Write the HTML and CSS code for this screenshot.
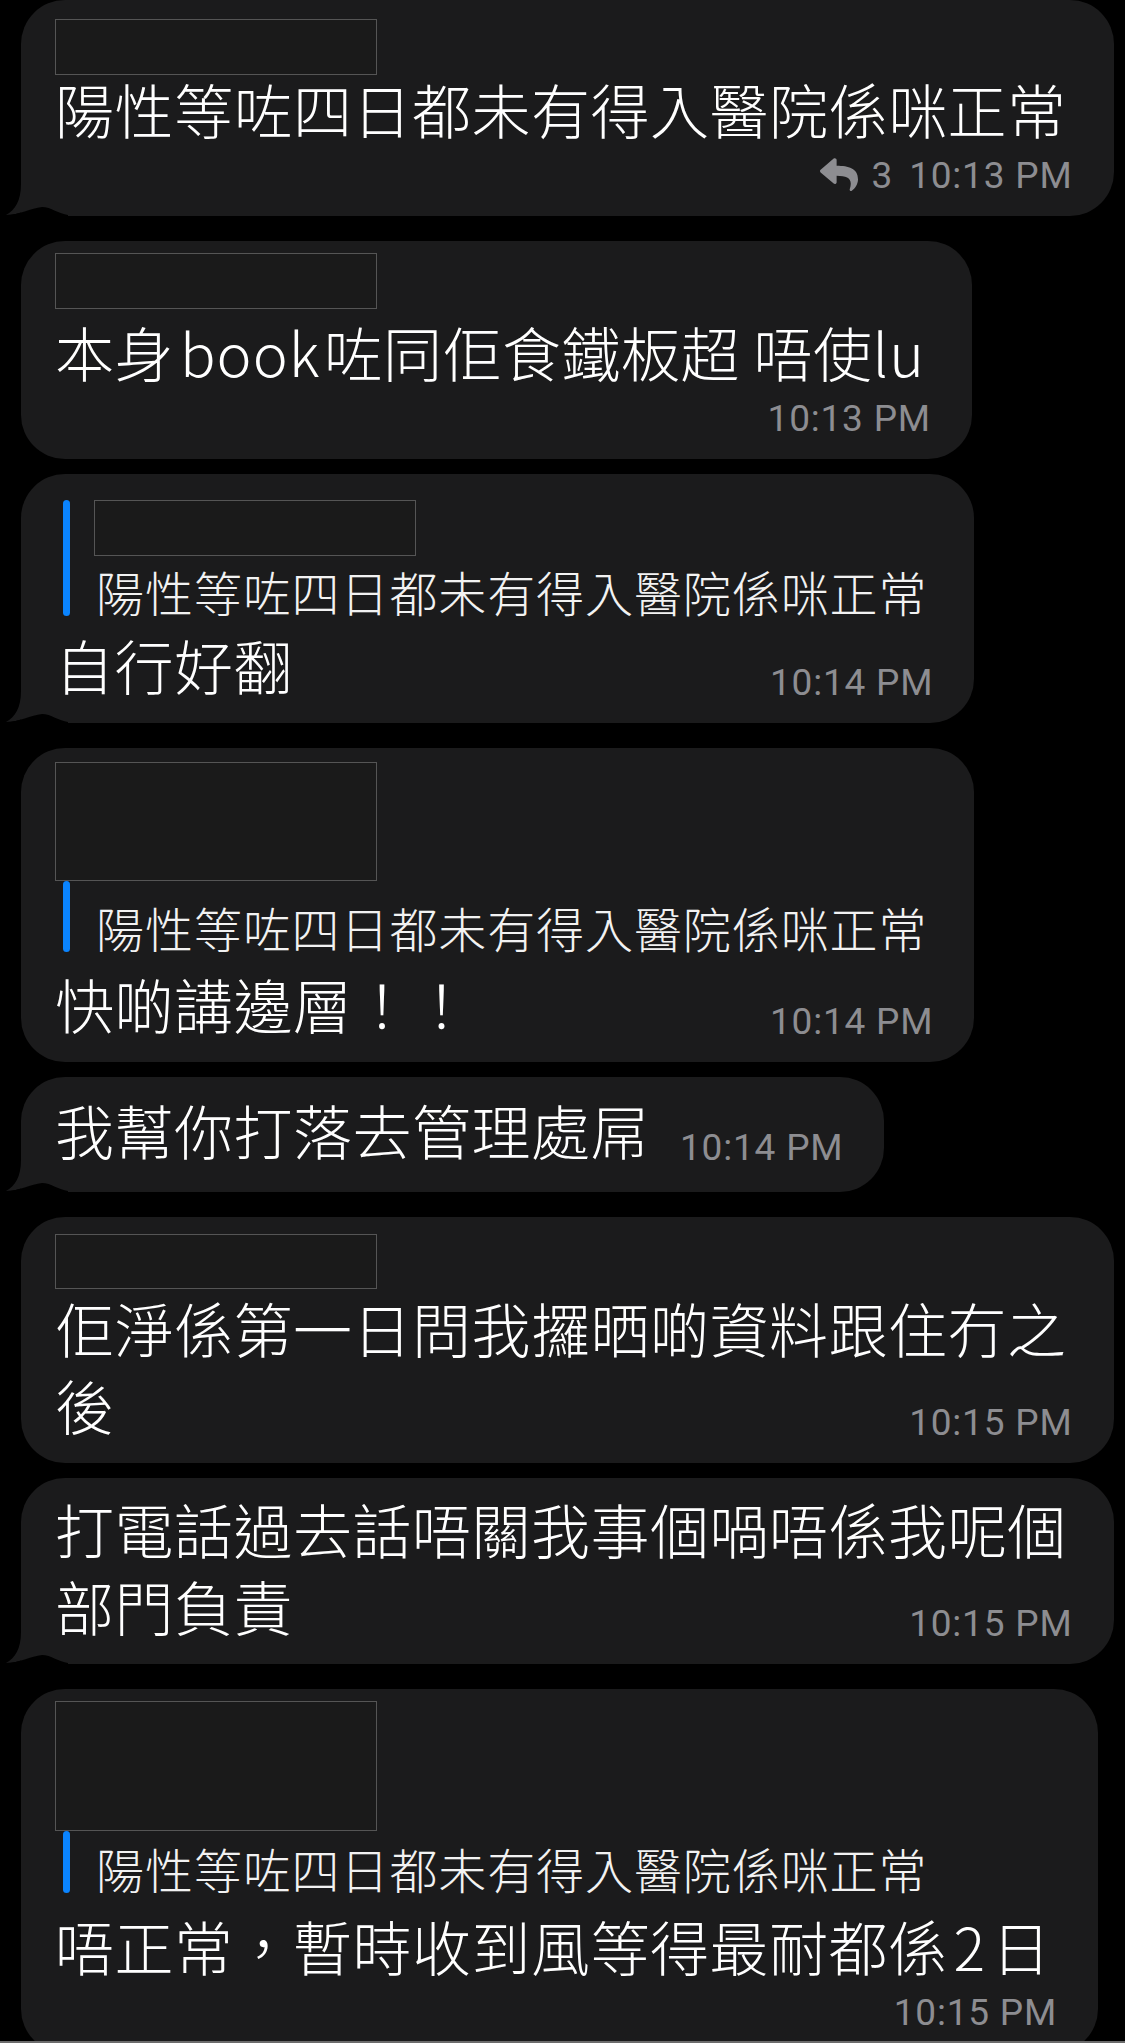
FILE: index.html
```html
<!DOCTYPE html>
<html lang="zh-Hant">
<head>
<meta charset="utf-8">
<title>Chat</title>
<link rel="stylesheet" href="styles.css">
</head>
<body>
<div class="screen">
  <div class="chat">

    <div class="bubble bubble--first bubble--tail">
      <div class="redact redact--name r1"></div>
      <p class="line">陽性等咗四日都未有得入醫院係咪正常</p>
      <div class="meta-line">
        <span class="meta">
          <svg class="reply-icon" viewBox="0 30 512 450" preserveAspectRatio="none"><path d="M8.309 189.836L184.313 37.851C199.719 24.546 224 35.347 224 56.015v80.053c160.629 1.839 288 34.032 288 186.258 0 61.441-39.581 122.309-83.333 154.132-13.653 9.931-33.111-2.533-28.077-18.631 45.344-145.012-21.507-183.51-176.59-185.742V360c0 20.7-24.3 31.453-39.687 18.164l-176.004-152c-11.071-9.562-11.086-26.753 0-36.328z"/></svg>
          <span class="count">3</span>
          <span class="time">10:13 PM</span>
        </span>
      </div>
      <svg class="tail" viewBox="0 0 62 46"><path class="tail-fill" d="M15 0 L15 14 C15 31 9 40 0 45 C13 45 25 38 36 37 L36 0 Z"/><path class="tail-notch" d="M0 45 C13 45 25 38 36 37 C45 37 53 44 62 45 L62 46 L0 46 Z"/></svg>
    </div>

    <div class="bubble bubble--group">
      <div class="redact redact--name r2"></div>
      <p class="line">本身<span class="latin">book</span>咗同佢食鐵板超 唔使<span class="latin latin--end">lu</span></p>
      <div class="meta-line">
        <span class="meta"><span class="time">10:13 PM</span></span>
      </div>
    </div>

    <div class="bubble bubble--tail">
      <div class="quote quote--top">
        <span class="quote-bar"></span>
        <div class="quote-body">
          <div class="redact redact--name rq"></div>
          <p class="quote-text">陽性等咗四日都未有得入醫院係咪正常</p>
        </div>
      </div>
      <div class="row row--after-quote">
        <p class="line">自行好翻</p>
        <span class="meta"><span class="time">10:14 PM</span></span>
      </div>
      <svg class="tail" viewBox="0 0 62 46"><path class="tail-fill" d="M15 0 L15 14 C15 31 9 40 0 45 C13 45 25 38 36 37 L36 0 Z"/><path class="tail-notch" d="M0 45 C13 45 25 38 36 37 C45 37 53 44 62 45 L62 46 L0 46 Z"/></svg>
    </div>

    <div class="bubble bubble--group">
      <div class="redact redact--tall r4"></div>
      <div class="quote">
        <span class="quote-bar"></span>
        <div class="quote-body quote-body--covered">
          <p class="quote-text">陽性等咗四日都未有得入醫院係咪正常</p>
        </div>
      </div>
      <div class="row row--after-quote-b">
        <p class="line">快啲講邊層！！</p>
        <span class="meta"><span class="time">10:14 PM</span></span>
      </div>
    </div>

    <div class="bubble bubble--tail bubble--single">
      <div class="row row--tight">
        <p class="line">我幫你打落去管理處屌</p>
        <span class="meta"><span class="time">10:14 PM</span></span>
      </div>
      <svg class="tail" viewBox="0 0 62 46"><path class="tail-fill" d="M15 0 L15 14 C15 31 9 40 0 45 C13 45 25 38 36 37 L36 0 Z"/><path class="tail-notch" d="M0 45 C13 45 25 38 36 37 C45 37 53 44 62 45 L62 46 L0 46 Z"/></svg>
    </div>

    <div class="bubble bubble--group">
      <div class="redact redact--name r6"></div>
      <p class="line">佢淨係第一日問我攞晒啲資料跟住冇之</p>
      <div class="row">
        <p class="line">後</p>
        <span class="meta"><span class="time">10:15 PM</span></span>
      </div>
    </div>

    <div class="bubble bubble--tail">
      <p class="line">打電話過去話唔關我事個喎唔係我呢個</p>
      <div class="row">
        <p class="line">部門負責</p>
        <span class="meta"><span class="time">10:15 PM</span></span>
      </div>
      <svg class="tail" viewBox="0 0 62 46"><path class="tail-fill" d="M15 0 L15 14 C15 31 9 40 0 45 C13 45 25 38 36 37 L36 0 Z"/><path class="tail-notch" d="M0 45 C13 45 25 38 36 37 C45 37 53 44 62 45 L62 46 L0 46 Z"/></svg>
    </div>

    <div class="bubble bubble--group">
      <div class="redact redact--photo"></div>
      <div class="quote">
        <span class="quote-bar"></span>
        <div class="quote-body quote-body--covered-b">
          <p class="quote-text">陽性等咗四日都未有得入醫院係咪正常</p>
        </div>
      </div>
      <p class="line line--after-quote">唔正常，暫時收到風等得最耐都係<span class="num">2</span>日</p>
      <div class="meta-line">
        <span class="meta"><span class="time">10:15 PM</span></span>
      </div>
    </div>

  </div>
  <div class="edge"></div>
</div>
</body>
</html>
```

FILE: styles.css
```css
* {
  box-sizing: border-box;
  margin: 0;
  padding: 0;
}

html,
body {
  background: #000;
}

body {
  width: 1125px;
  height: 2043px;
  overflow: hidden;
  font-family: "Noto Sans CJK TC", "Noto Sans CJK SC", sans-serif;
  font-weight: 300;
  color: #fff;
}

.screen {
  height: 2043px;
  display: flex;
  flex-direction: column;
}

.chat {
  flex: 1;
  min-height: 0;
  overflow: hidden;
  display: flex;
  flex-direction: column;
  align-items: flex-start;
  padding-left: 21px;
}

.edge {
  flex: none;
  height: 2px;
  background: #6c6c6c;
}

/* bubbles */
.bubble {
  position: relative;
  flex-shrink: 0;
  background: #1b1b1c;
  border-radius: 44px;
  padding: 12px 47px 20px 34px;
  margin-top: 15px;
}

.bubble--first {
  margin-top: 0;
}

.bubble--group {
  margin-top: 25px;
}

.bubble--tail {
  border-bottom-left-radius: 0;
}

.bubble--single {
  padding-top: 14px;
  padding-bottom: 24px;
}

.tail {
  position: absolute;
  left: -15px;
  bottom: 0;
  width: 62px;
  height: 46px;
  display: block;
}

.tail-fill {
  fill: #1b1b1c;
}

.tail-notch {
  fill: #000;
}

/* text */
.line {
  font-size: 59px;
  line-height: 77px;
  letter-spacing: 0.5px;
  white-space: nowrap;
}

.line--after-quote {
  margin-top: 14px;
}

.latin {
  margin: 0 3px 0 6px;
  letter-spacing: 1px;
}

.latin--end {
  margin: 0;
}

.num {
  margin: 0 6px;
}

.row {
  display: flex;
  align-items: flex-end;
  justify-content: space-between;
  gap: 30px;
}

.row--after-quote {
  margin-top: 10px;
}

.row--after-quote-b {
  margin-top: 13px;
}

.meta-line {
  height: 49px;
  display: flex;
  justify-content: flex-end;
  align-items: flex-end;
}

.meta {
  display: flex;
  align-items: flex-end;
  margin-right: -6px;
  font-family: Roboto, "Liberation Sans", sans-serif;
  font-weight: 400;
  font-size: 37px;
  line-height: 40px;
  letter-spacing: 0.8px;
  color: #8d8d91;
  white-space: nowrap;
}

.reply-icon {
  width: 38px;
  height: 33px;
  margin-right: 14px;
  margin-bottom: 5px;
  fill: #8d8d91;
  flex: none;
}

.count {
  margin-right: 16px;
}

/* redaction boxes */
.redact {
  width: 322px;
  border: 1px solid #555;
  background: #1a1a1a;
}

.redact--name {
  height: 56px;
}

.redact--tall {
  height: 119px;
}

.redact--photo {
  height: 130px;
}

.r1 {
  margin-top: 7px;
  margin-bottom: -5px;
}

.r2 {
  margin-bottom: 4px;
}

.r4 {
  margin-top: 2px;
}

.r6 {
  height: 55px;
  margin-top: 5px;
}

.rq {
  margin-bottom: 10px;
}

/* quotes */
.quote {
  display: flex;
  margin-left: 8px;
}

.quote--top {
  margin-top: 14px;
}

.quote-bar {
  flex: none;
  width: 7px;
  border-radius: 4px;
  background: #0a84ff;
}

.quote-body {
  padding-left: 24px;
}

.quote-body--covered {
  padding-top: 21px;
}

.quote-body--covered-b {
  padding-top: 12px;
}

.quote-text {
  margin-left: 2px;
  font-size: 48px;
  line-height: 50px;
  letter-spacing: 0.9px;
  white-space: nowrap;
  color: #f2f2f2;
}
```
